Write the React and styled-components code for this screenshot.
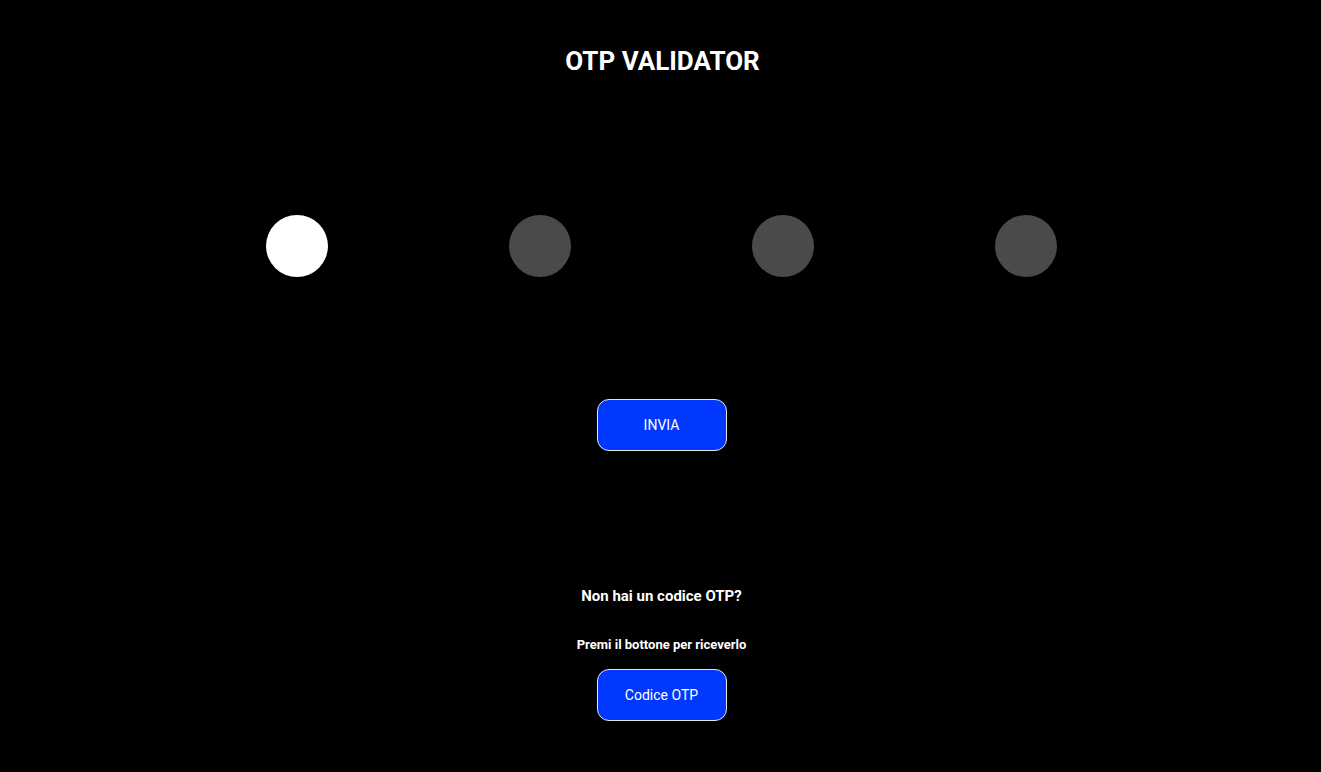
import React, { useState } from "react";
import styled, { createGlobalStyle } from "styled-components";

const GlobalStyle = createGlobalStyle`
  html, body {
    margin: 0;
    padding: 0;
    background: #000;
  }
  body {
    font-family: Roboto, "Liberation Sans", sans-serif;
    color: #fff;
  }
`;

const StyledPage = styled.div`
  min-height: 772px;
  padding-left: 2px;
  background: #000;
  display: flex;
  flex-direction: column;
  align-items: center;
`;

const Title = styled.h1`
  margin: 46px 0 0 2px;
  font-size: 26px;
  line-height: 30px;
  font-weight: 700;
`;

const Dots = styled.div`
  width: 971px;
  margin-top: 139px;
  display: flex;
  justify-content: space-around;
`;

const Dot = styled.div`
  width: 62px;
  height: 62px;
  border-radius: 50%;
  background: ${(p) => (p.filled ? "#ffffff" : "#4a4a4a")};
`;

const Button = styled.button`
  width: 130px;
  height: 52px;
  margin-top: ${(p) => p.$top || 0}px;
  background: #0038ff;
  color: #fff;
  border: 1px solid #e6e6e6;
  border-radius: 12px;
  font-family: Roboto, "Liberation Sans", sans-serif;
  font-size: 14px;
  cursor: pointer;
`;

const Question = styled.p`
  margin: 136px 0 0;
  font-size: 15px;
  line-height: 18px;
  font-weight: 700;
`;

const Hint = styled.p`
  margin: 32px 0 0;
  font-size: 13px;
  line-height: 15px;
  font-weight: 700;
`;

const App = () => {
  const [code] = useState(["1", "", "", ""]);

  return (
    <StyledPage>
      <GlobalStyle />
      <Title>OTP VALIDATOR</Title>
      <Dots>
        {code.map((c, i) => (
          <Dot key={i} filled={c !== ""} />
        ))}
      </Dots>
      <Button $top={122}>INVIA</Button>
      <Question>Non hai un codice OTP?</Question>
      <Hint>Premi il bottone per riceverlo</Hint>
      <Button $top={17}>Codice OTP</Button>
    </StyledPage>
  );
};

export default App;
